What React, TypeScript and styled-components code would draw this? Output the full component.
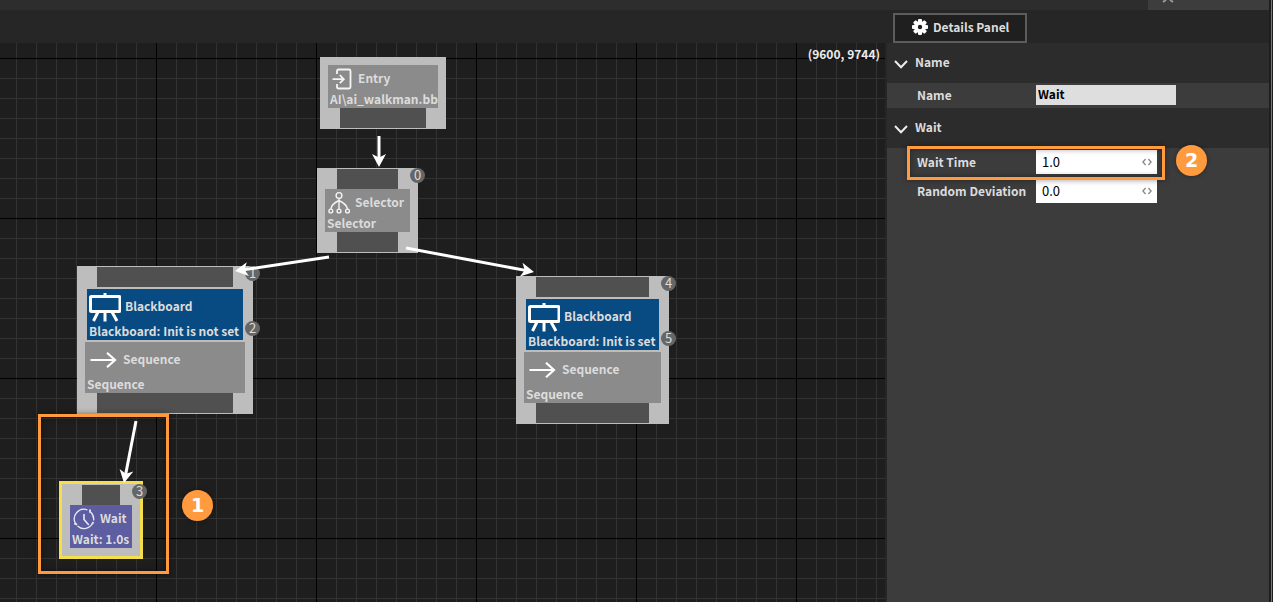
import React from "react";
import styled, { createGlobalStyle } from "styled-components";

const GlobalStyle = createGlobalStyle`
  * { box-sizing: border-box; }
  body {
    margin: 0;
    background: #262626;
    color: #dcdcdc;
    font: 700 12px/20px "Noto Sans CJK SC", "Noto Sans", sans-serif;
  }
  input, button { font: inherit; color: inherit; }
`;

const Page = styled.div`
  display: flex;
  min-height: 100vh;
`;

const Editor = styled.div`
  flex: 1;
  display: flex;
  flex-direction: column;
  min-width: 0;
`;

const WindowEdge = styled.div`
  flex: none;
  width: 4px;
  background: linear-gradient(90deg, #1e1e1e 2px, #2090e0 2px, #2090e0 3px, #1e1e1e 3px);
`;

const TopBar = styled.div`
  height: 10px;
  display: flex;
  justify-content: flex-end;
  background: #2d2d2d;
`;

const DockTab = styled.div`
  width: 121px;
  padding-left: 14px;
  background: #3d3d3d;
  overflow: hidden;
  svg { display: block; }
`;

const Toolbar = styled.div`
  height: 33px;
  display: flex;
  justify-content: flex-end;
  align-items: flex-end;
  background: #262626;
`;

const ToolbarSlot = styled.div`
  width: 376px;
  display: flex;
`;

const PanelTab = styled.button`
  height: 30px;
  width: 134px;
  display: flex;
  align-items: center;
  gap: 5px;
  padding: 0 0 2px 17px;
  border: 2px solid #5c5c5c;
  background: #1f1f1f;
  white-space: nowrap;
`;

const Body = styled.div`
  flex: 1;
  display: flex;
  gap: 2px;
`;

const Canvas = styled.main`
  flex: 1;
  min-width: 0;
  position: relative;
  overflow: hidden;
  background-color: #1e1e1e;
  background-image:
    linear-gradient(90deg, #000 1px, transparent 1px),
    linear-gradient(#000 1px, transparent 1px),
    linear-gradient(90deg, #323232 1px, transparent 1px),
    linear-gradient(#323232 1px, transparent 1px);
  background-size: 160px 160px, 160px 160px, 20px 20px, 20px 20px;
  background-position: 156px 0, 0 15px, 16px 0, 0 15px;
`;

const Coordinates = styled.div`
  position: absolute;
  top: 1px;
  right: 5px;
  color: #ececec;
`;

const NodeBox = styled.section<{ $x: number; $y: number; $w: number; $selected?: boolean; $padTop?: number; $padBottom?: number }>`
  position: absolute;
  left: ${(p) => p.$x}px;
  top: ${(p) => p.$y}px;
  width: ${(p) => p.$w}px;
  display: flex;
  flex-direction: column;
  padding: ${(p) => p.$padTop ?? 1}px 0 ${(p) => p.$padBottom ?? 1}px;
  background: #bdbdbd;
  border: ${(p) => (p.$selected ? "3px solid #f5de4b" : "0")};
`;

const Port = styled.div`
  height: 20px;
  margin: 0 20px;
  background: #505050;
`;

const Block = styled.div<{ $color?: string; $tall?: boolean; $decorator?: boolean }>`
  height: ${(p) => (p.$tall ? 51 : 43)}px;
  margin: ${(p) => (p.$decorator ? "2px 10px" : "0 8px")};
  padding: 0 2px;
  display: flex;
  flex-direction: column;
  justify-content: space-between;
  background: ${(p) => p.$color ?? "#8b8b8b"};
  white-space: nowrap;
`;

const BlockTitle = styled.div<{ $tall?: boolean }>`
  height: ${(p) => (p.$tall ? 34 : 26)}px;
  display: flex;
  align-items: center;
  gap: 4px;
  svg { flex: none; }
`;

const BlockText = styled.div`
  height: 17px;
  line-height: 16px;
`;

const Badge = styled.span<{ $top?: number; $right?: number }>`
  position: absolute;
  top: ${(p) => p.$top ?? 0}px;
  right: ${(p) => p.$right ?? -7}px;
  width: 15px;
  height: 15px;
  border-radius: 50%;
  background: #666;
  text-align: center;
  font-size: 13px;
  font-weight: 400;
  line-height: 13px;
`;

const Edges = styled.svg`
  position: absolute;
  left: 0;
  top: 0;
  pointer-events: none;
`;

const Highlight = styled.div<{ $x: number; $y: number; $w: number; $h: number }>`
  position: absolute;
  left: ${(p) => p.$x}px;
  top: ${(p) => p.$y}px;
  width: ${(p) => p.$w}px;
  height: ${(p) => p.$h}px;
  border: 3px solid #ff9b3e;
  box-shadow: 0 0 6px rgba(0, 0, 0, 0.4), inset 0 0 6px rgba(0, 0, 0, 0.4);
  pointer-events: none;
`;

const Step = styled.span<{ $x: number; $y: number }>`
  position: absolute;
  left: ${(p) => p.$x}px;
  top: ${(p) => p.$y}px;
  width: 31px;
  height: 31px;
  border-radius: 50%;
  background: #ff9b3e;
  color: #fff;
  text-align: center;
  font: 700 19px/31px "DejaVu Sans", sans-serif;
  box-shadow: 0 0 4px rgba(0, 0, 0, 0.4);
`;

const Panel = styled.aside`
  width: 382px;
  background: #3c3c3c;
`;

const SectionHead = styled.button`
  width: 100%;
  height: 40px;
  display: flex;
  align-items: center;
  gap: 7px;
  padding: 0 7px 2px;
  border: 0;
  background: #2c2c2c;
`;

const Fields = styled.div<{ $spaced?: boolean }>`
  position: relative;
  display: flex;
  flex-direction: column;
  gap: 5px;
  padding: ${(p) => (p.$spaced ? "2px 0" : "2px 0 3px")};
`;

const Field = styled.div`
  display: grid;
  grid-template-columns: 119px 1fr;
  align-items: center;
  padding-left: 30px;
  white-space: nowrap;
`;

const TextInput = styled.input`
  width: 140px;
  height: 20px;
  padding: 0 2px 2px;
  border: 0;
  background: #dedede;
  color: #000;
`;

const NumberBox = styled.div`
  width: 121px;
  height: 24px;
  display: flex;
  align-items: center;
  padding: 0 5px 0 6px;
  background: #fff;
`;

const NumberInput = styled.input`
  flex: 1;
  min-width: 0;
  height: 24px;
  padding: 0 0 2px;
  border: 0;
  background: transparent;
  color: #000;
  font-size: 13px;
  font-weight: 400;
`;

const GearIcon = () => (
  <svg width="16" height="16" viewBox="0 0 16 16" aria-hidden="true">
    <g fill="#fff">
      {[0, 45, 90, 135].map((a) => (
        <rect key={a} x="6" y="0" width="4" height="16" rx="1" transform={`rotate(${a} 8 8)`} />
      ))}
      <circle cx="8" cy="8" r="6" />
    </g>
    <circle cx="8" cy="8" r="2.2" fill="#1f1f1f" />
  </svg>
);

const Chevron = () => (
  <svg width="14" height="14" viewBox="0 0 14 14" fill="none" stroke="#ececec" strokeWidth="2" aria-hidden="true">
    <path d="M1 6l6 6.200L13 6" />
  </svg>
);

const DragIcon = () => (
  <svg width="10" height="8" viewBox="0 0 10 8" fill="none" stroke="#8a8a8a" strokeWidth="1.3" aria-hidden="true">
    <path d="M3.6 1L.9 4l2.7 3M6.4 1l2.7 3-2.7 3" />
  </svg>
);

const EntryIcon = () => (
  <svg width="24" height="24" viewBox="0 0 24 24" fill="none" stroke="#f4f4f4" strokeWidth="1.8" aria-hidden="true">
    <path d="M7 8V5q0-1.500 1.500-1.500H19q1.500 0 1.500 1.500v16q0 1.500-1.500 1.500H8.500Q7 22.500 7 21v-3M2.500 13.200h11M9.800 9.200l4 4-4 4" />
  </svg>
);

const SelectorIcon = () => (
  <svg width="24" height="24" viewBox="0 0 24 24" fill="none" stroke="#f4f4f4" strokeWidth="1.400" aria-hidden="true">
    <circle cx="12" cy="5.500" r="2.900" />
    <circle cx="3.800" cy="21" r="1.900" />
    <circle cx="12" cy="21" r="1.900" />
    <circle cx="20.500" cy="21" r="1.900" />
    <path d="M12 8.500V19M12 10.500C6.500 13 4.500 15.500 3.800 19M12 10.500c5.500 2.500 7.800 5 8.500 8.500" />
  </svg>
);

const BlackboardIcon = () => (
  <svg width="32" height="32" viewBox="0 0 32 32" fill="none" stroke="#fff" strokeWidth="3" aria-hidden="true">
    <rect x="1.500" y="6.500" width="29.500" height="15" rx="1" />
    <path d="M16 3v4M16 22v9.500M9 22l-4.500 9M23 22l5 9" />
  </svg>
);

const SequenceIcon = () => (
  <svg width="32" height="24" viewBox="0 0 32 24" fill="none" stroke="#fff" strokeWidth="2.200" aria-hidden="true">
    <path d="M3.500 13h24M20 5.800l8 7.200-8 7.200" />
  </svg>
);

const ClockIcon = () => (
  <svg width="24" height="24" viewBox="0 0 24 24" fill="none" stroke="#e8e8f4" strokeWidth="1.300" aria-hidden="true">
    <g transform="translate(0 1)">
      <path d="M15.500 3A9.600 9.600 0 0 0 3.500 16.500M5.500 19A9.600 9.600 0 0 0 20.700 16M21.600 13.500A9.600 9.600 0 0 0 18.500 5" />
      <path d="M12 7v5.500l4.800 5.500" strokeWidth="1.600" />
      <path d="M18 2.600v3.200M2.200 16.400l3 1.200M20 16.800l1.600-1.600" strokeWidth="1.800" />
    </g>
  </svg>
);

type Edge = [number, number, number, number];

const edges: Edge[] = [
  [379, 93, 379, 124],
  [329, 214, 235, 228],
  [406, 205, 534, 229],
  [136, 378, 124, 440],
];

const Arrow = ({ edge: [x1, y1, x2, y2] }: { edge: Edge }) => {
  const length = Math.hypot(x2 - x1, y2 - y1);
  const angle = (Math.atan2(y2 - y1, x2 - x1) * 180) / Math.PI;
  return (
    <g transform={`translate(${x1} ${y1}) rotate(${angle})`}>
      <path d={`M0 0H${length - 6}`} stroke="#fff" strokeWidth="3" />
      <path d={`M${length} 0l-13 -7l3.500 7l-3.500 7z`} fill="#fff" />
    </g>
  );
};

const BlackboardNode = ({ x, y, w, condition, indices }: { x: number; y: number; w: number; condition: string; indices: [number, number] }) => (
  <NodeBox $x={x} $y={y} $w={w}>
    <Port />
    <Block $color="#084b82" $tall $decorator>
      <BlockTitle $tall>
        <BlackboardIcon />
        Blackboard
      </BlockTitle>
      <BlockText>{condition}</BlockText>
    </Block>
    <Block $tall>
      <BlockTitle $tall>
        <SequenceIcon />
        Sequence
      </BlockTitle>
      <BlockText>Sequence</BlockText>
    </Block>
    <Port />
    <Badge>{indices[0]}</Badge>
    <Badge $top={55}>{indices[1]}</Badge>
  </NodeBox>
);

const NumberField = ({ id, label, value }: { id: string; label: string; value: string }) => (
  <Field>
    <label htmlFor={id}>{label}</label>
    <NumberBox>
      <NumberInput id={id} defaultValue={value} inputMode="decimal" />
      <DragIcon />
    </NumberBox>
  </Field>
);

export default function App() {
  return (
    <Page>
      <GlobalStyle />
      <Editor>
        <TopBar>
          <DockTab>
            <svg width="12" height="4" viewBox="0 0 12 4" fill="none" stroke="#999" strokeWidth="2" aria-hidden="true">
              <path d="M1 2l3-2M11 2L8 0" />
            </svg>
          </DockTab>
        </TopBar>
        <Toolbar>
          <ToolbarSlot>
            <PanelTab type="button">
              <GearIcon />
              Details Panel
            </PanelTab>
          </ToolbarSlot>
        </Toolbar>
        <Body>
          <Canvas>
            <Coordinates>(9600, 9744)</Coordinates>
            <NodeBox $x={320} $y={14} $w={126} $padTop={8}>
              <Block>
                <BlockTitle>
                  <EntryIcon />
                  Entry
                </BlockTitle>
                <BlockText>AI\ai_walkman.bb</BlockText>
              </Block>
              <Port />
            </NodeBox>
            <NodeBox $x={317} $y={125} $w={101}>
              <Port />
              <Block>
                <BlockTitle>
                  <SelectorIcon />
                  Selector
                </BlockTitle>
                <BlockText>Selector</BlockText>
              </Block>
              <Port />
              <Badge>0</Badge>
            </NodeBox>
            <BlackboardNode x={77} y={223} w={176} condition="Blackboard: Init is not set" indices={[1, 2]} />
            <BlackboardNode x={516} y={233} w={153} condition="Blackboard: Init is set" indices={[4, 5]} />
            <NodeBox $x={59} $y={438} $w={84} $selected $padBottom={8}>
              <Port />
              <Block $color="#5d5da2">
                <BlockTitle>
                  <ClockIcon />
                  Wait
                </BlockTitle>
                <BlockText>Wait: 1.0s</BlockText>
              </Block>
              <Badge>3</Badge>
            </NodeBox>
            <Edges width="100%" height="100%" aria-hidden="true">
              {edges.map((edge) => (
                <Arrow key={edge.join()} edge={edge} />
              ))}
            </Edges>
            <Highlight $x={38} $y={371} $w={131} $h={160} />
            <Step $x={182} $y={447}>1</Step>
          </Canvas>
          <Panel>
            <SectionHead type="button">
              <Chevron />
              Name
            </SectionHead>
            <Fields>
              <Field>
                <label htmlFor="node-name">Name</label>
                <TextInput id="node-name" defaultValue="Wait" />
              </Field>
            </Fields>
            <SectionHead type="button">
              <Chevron />
              Wait
            </SectionHead>
            <Fields $spaced>
              <NumberField id="wait-time" label="Wait Time" value="1.0" />
              <NumberField id="random-deviation" label="Random Deviation" value="0.0" />
              <Highlight $x={20} $y={-2} $w={258} $h={34} />
              <Step $x={289} $y={-3}>2</Step>
            </Fields>
          </Panel>
        </Body>
      </Editor>
      <WindowEdge />
    </Page>
  );
}
